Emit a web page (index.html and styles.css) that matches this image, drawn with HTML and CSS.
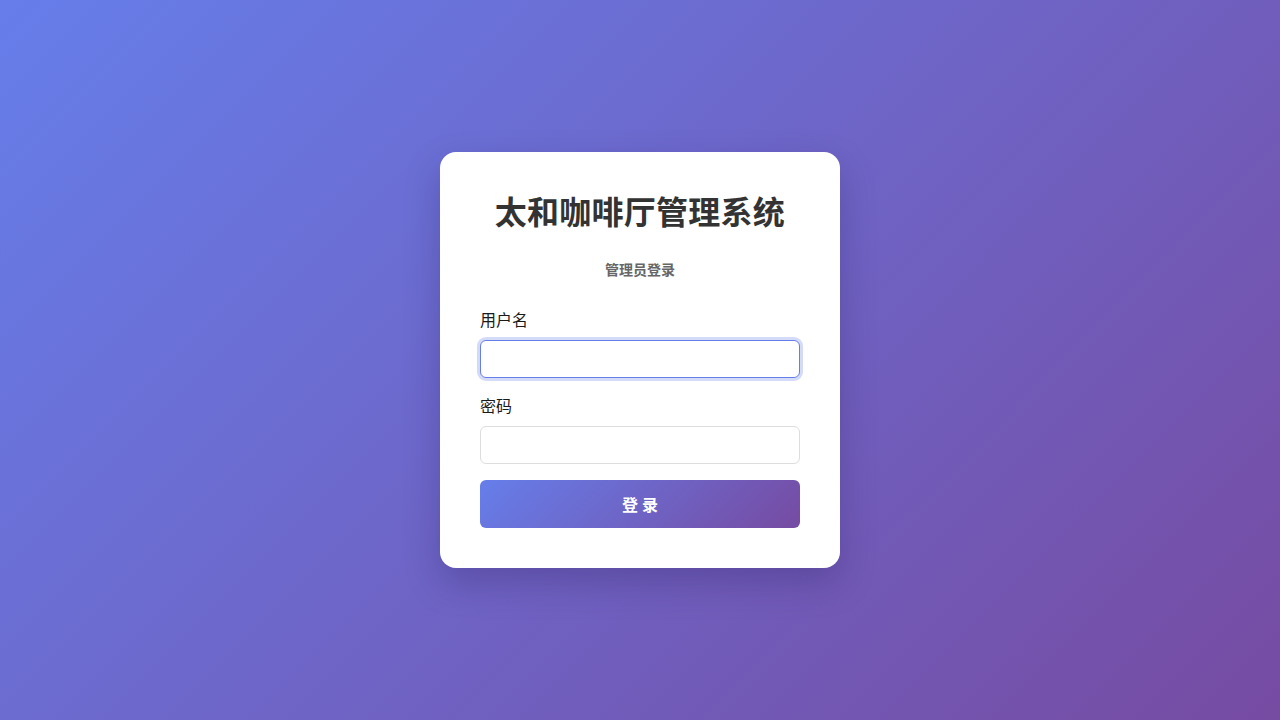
FILE: index.html
```html
<!DOCTYPE html>
<html lang="zh-CN">
<head>
<meta charset="utf-8">
<title>太和咖啡厅管理系统</title>
<link rel="stylesheet" href="styles.css">
</head>
<body>
<div class="page">
  <div class="card">
    <h1 class="title">太和咖啡厅管理系统</h1>
    <p class="subtitle">管理员登录</p>
    <form class="form">
      <div class="group">
        <label class="label">用户名</label>
        <input class="input input-focus" type="text">
      </div>
      <div class="group">
        <label class="label">密码</label>
        <input class="input" type="password">
      </div>
      <button class="btn" type="button">登 录</button>
    </form>
  </div>
</div>
</body>
</html>
```

FILE: styles.css
```css
html, body {
  margin: 0;
  padding: 0;
  height: 100%;
}
body {
  font-family: "Noto Sans", "Noto Sans CJK SC", sans-serif;
  background: linear-gradient(135deg, #667eea 0%, #764ba2 100%);
}
.page {
  height: 720px;
  display: flex;
  align-items: center;
  justify-content: center;
}
.card {
  width: 400px;
  box-sizing: border-box;
  padding: 40px;
  background: #fff;
  border-radius: 16px;
  box-shadow: 0 15px 35px rgba(30, 20, 80, 0.25);
}
.title {
  margin: 0;
  text-align: center;
  font-size: 32px;
  line-height: 40px;
  font-weight: 700;
  color: #333;
  letter-spacing: 0.25px;
}
.subtitle {
  margin: 28px 0 0;
  text-align: center;
  font-size: 14px;
  line-height: 20px;
  font-weight: 700;
  color: #666;
}
.form {
  margin-top: 29px;
  display: flex;
  flex-direction: column;
}
.group {
  display: flex;
  flex-direction: column;
  margin-bottom: 17px;
}
.group + .group {
  margin-bottom: 16px;
}
.label {
  font-size: 16px;
  line-height: 22px;
  color: #1a1a1a;
  margin-bottom: 9px;
}
.input {
  box-sizing: border-box;
  height: 38px;
  width: 100%;
  border: 1px solid #ddd;
  border-radius: 6px;
  padding: 0 12px;
  font-size: 14px;
  outline: none;
  background: #fff;
}
.input-focus {
  border-color: #667eea;
  box-shadow: 0 0 0 3px rgba(102, 126, 234, 0.28);
}
.btn {
  height: 48px;
  border: none;
  border-radius: 6px;
  background: linear-gradient(135deg, #667eea 0%, #764ba2 100%);
  color: #fff;
  font-family: "Noto Sans", "Noto Sans CJK SC", sans-serif;
  font-size: 16px;
  font-weight: 700;
  letter-spacing: 0;
  cursor: pointer;
}
```
